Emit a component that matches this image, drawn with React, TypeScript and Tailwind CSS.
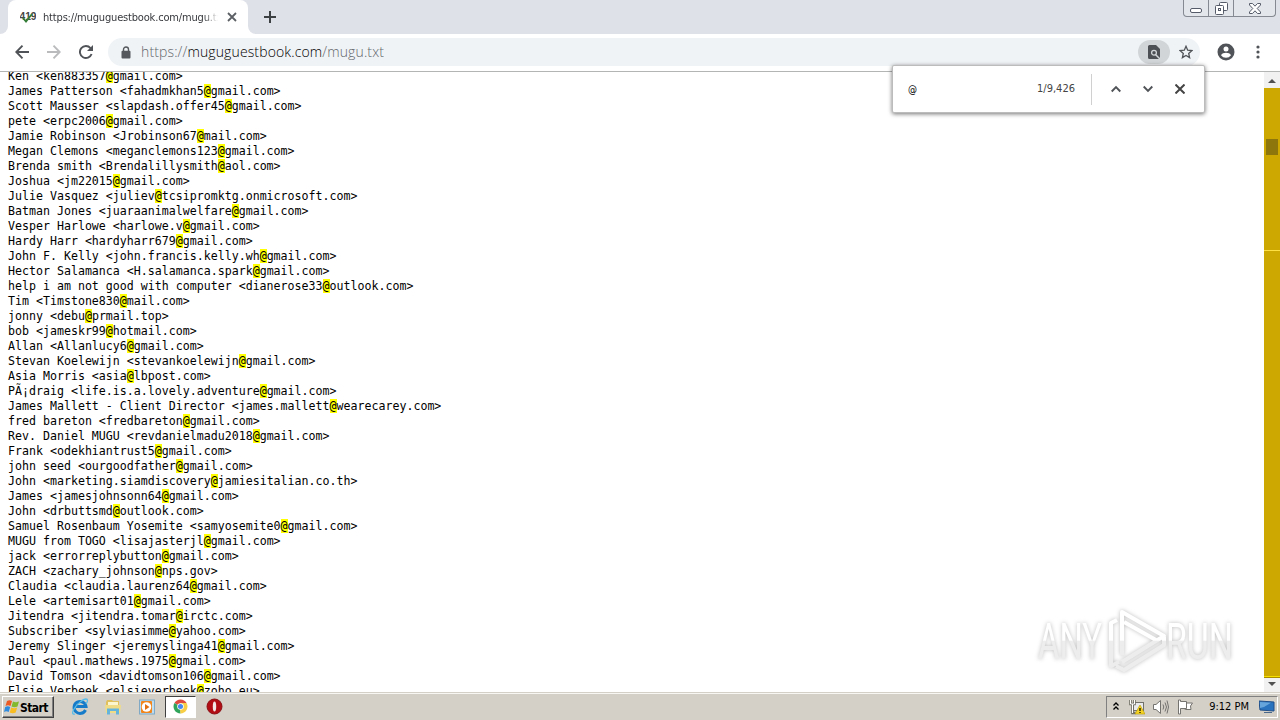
import { Fragment } from "react";

const entries = [
  "Ken <ken883357@gmail.com>",
  "James Patterson <fahadmkhan5@gmail.com>",
  "Scott Mausser <slapdash.offer45@gmail.com>",
  "pete <erpc2006@gmail.com>",
  "Jamie Robinson <Jrobinson67@mail.com>",
  "Megan Clemons <meganclemons123@gmail.com>",
  "Brenda smith <Brendalillysmith@aol.com>",
  "Joshua <jm22015@gmail.com>",
  "Julie Vasquez <juliev@tcsipromktg.onmicrosoft.com>",
  "Batman Jones <juaraanimalwelfare@gmail.com>",
  "Vesper Harlowe <harlowe.v@gmail.com>",
  "Hardy Harr <hardyharr679@gmail.com>",
  "John F. Kelly <john.francis.kelly.wh@gmail.com>",
  "Hector Salamanca <H.salamanca.spark@gmail.com>",
  "help i am not good with computer <dianerose33@outlook.com>",
  "Tim <Timstone830@mail.com>",
  "jonny <debu@prmail.top>",
  "bob <jameskr99@hotmail.com>",
  "Allan <Allanlucy6@gmail.com>",
  "Stevan Koelewijn <stevankoelewijn@gmail.com>",
  "Asia Morris <asia@lbpost.com>",
  "PÃ¡draig <life.is.a.lovely.adventure@gmail.com>",
  "James Mallett - Client Director <james.mallett@wearecarey.com>",
  "fred bareton <fredbareton@gmail.com>",
  "Rev. Daniel MUGU <revdanielmadu2018@gmail.com>",
  "Frank <odekhiantrust5@gmail.com>",
  "john seed <ourgoodfather@gmail.com>",
  "John <marketing.siamdiscovery@jamiesitalian.co.th>",
  "James <jamesjohnsonn64@gmail.com>",
  "John <drbuttsmd@outlook.com>",
  "Samuel Rosenbaum Yosemite <samyosemite0@gmail.com>",
  "MUGU from TOGO <lisajasterjl@gmail.com>",
  "jack <errorreplybutton@gmail.com>",
  "ZACH <zachary_johnson@nps.gov>",
  "Claudia <claudia.laurenz64@gmail.com>",
  "Lele <artemisart01@gmail.com>",
  "Jitendra <jitendra.tomar@irctc.com>",
  "Subscriber <sylviasimme@yahoo.com>",
  "Jeremy Slinger <jeremyslinga41@gmail.com>",
  "Paul <paul.mathews.1975@gmail.com>",
  "David Tomson <davidtomson106@gmail.com>",
  "Elsie Verbeek <elsieverbeek@zoho.eu>",
];

function Entry({ text }: { text: string }) {
  const parts = text.split("@");
  return (
    <div className="h-[15px] whitespace-pre">
      {parts.map((part, i) => (
        <Fragment key={i}>
          {i > 0 && <span className="inline-block h-[14px] bg-[#ffff00] align-top leading-[15px]">@</span>}
          {part}
        </Fragment>
      ))}
    </div>
  );
}

function TabStrip() {
  return (
    <div className="flex h-[34px] bg-[#dee1e8]">
      <div className="flex w-2 items-end bg-white">
        <div className="h-full w-2 rounded-br-lg bg-[#dee1e8]" />
      </div>
      <div className="flex h-[34px] w-60 items-center rounded-t-lg bg-white pl-3">
        <svg className="h-4 w-4 shrink-0" viewBox="0 0 16 16">
          <text x="-0.5" y="11" fontSize="10" fontWeight="bold" fontFamily="Liberation Sans, sans-serif" fill="#454545" textLength="17" lengthAdjust="spacingAndGlyphs">419</text>
          <path d="M3 9l3 3.5L12 5" fill="none" stroke="#347d38" strokeWidth="1.8" />
        </svg>
        <div className="ml-[7px] w-[175px] overflow-hidden whitespace-nowrap bg-linear-to-r from-[#303236] from-92% to-transparent bg-clip-text pt-px font-['DejaVu_Sans_Condensed','DejaVu_Sans',sans-serif] text-[11px] leading-[18px] tracking-[-0.17px] text-transparent">
          https://muguguestbook.com/mugu.txt
        </div>
        <svg className="ml-[9px] h-[10px] w-[10px]" viewBox="0 0 10 10" stroke="#5c6065" strokeWidth="1.8">
          <path d="M1 1l8 8M9 1l-8 8" />
        </svg>
      </div>
      <div className="w-2 bg-white">
        <div className="h-full w-2 rounded-bl-lg bg-[#dee1e8]" />
      </div>
      <svg className="mt-[11px] ml-2 h-3 w-3" viewBox="0 0 12 12" stroke="#3c4043" strokeWidth="2">
        <path d="M6 0v12M0 6h12" />
      </svg>
      <div className="mr-1 ml-auto flex h-[17px] w-[93px] rounded-b-[4px] border border-t-0 border-[#858991] bg-[#e3e6eb]">
        <div className="flex w-[25px] justify-center border-r border-[#858991] pt-2">
          <div className="h-[5px] w-3 rounded-[2px] border border-[#555b68] bg-white" />
        </div>
        <div className="flex w-[25px] justify-center border-r border-[#858991] pt-[2px]">
          <svg className="h-[13px] w-[13px]" viewBox="0 0 13 13" fill="#fff" stroke="#555b68">
            <rect x="4.5" y="0.5" width="8" height="8" rx="1" />
            <rect x="0.5" y="3.5" width="8" height="9" rx="1" />
            <rect x="3.5" y="6.5" width="2" height="2" />
          </svg>
        </div>
        <div className="flex flex-1 justify-center pt-[3px]">
          <svg className="h-[11px] w-3" viewBox="0 0 12 11">
            <path d="M.5.5h3L6 3.2 8.5.5h3V2L8.2 5.5 11.500 9v1.500h-3L6 7.800 3.500 10.500h-3V9l3.300-3.500L.5 2z" fill="#fff" stroke="#555b68" />
          </svg>
        </div>
      </div>
    </div>
  );
}

function Toolbar() {
  return (
    <div className="flex h-[38px] items-center border-b border-[#b3b5b4] bg-white pb-px pl-2 text-[#5f6368]">
      <svg className="ml-[7px] h-[14px] w-[14px]" viewBox="0 0 14 14" fill="none" stroke="#505357" strokeWidth="1.9">
        <path d="M14 7H1.500M7.500.7L1.300 7l6.200 6.300" />
      </svg>
      <svg className="ml-[18px] h-[14px] w-[14px]" viewBox="0 0 14 14" fill="none" stroke="#b9bbbd" strokeWidth="1.9">
        <path d="M0 7h12.500M6.500.7L12.700 7l-6.200 6.300" />
      </svg>
      <svg className="ml-[18px] h-[14px] w-[14px]" viewBox="0 0 14 14">
        <path d="M11.500 3.100A6 6 0 1 0 12.600 9" fill="none" stroke="#505357" strokeWidth="1.9" />
        <path d="M14 0v6H8z" fill="#505357" />
      </svg>
      <div className="ml-[15px] flex h-7 w-[1092px] items-center rounded-full bg-[#f0f3f6]">
        <svg className="ml-[13px] h-[13px] w-[10px]" viewBox="0 0 10 13">
          <path d="M2.500 5V3.500a2.500 2.500 0 0 1 5 0V5" fill="none" stroke="#55585c" strokeWidth="1.4" />
          <rect x="0.500" y="4.700" width="9" height="7.800" rx="1" fill="#55585c" />
        </svg>
        <div className="ml-[10px] flex-1 whitespace-nowrap font-['Open_Sans','Noto_Sans',sans-serif] text-[14px] leading-5 font-light tracking-[0.130px] text-[#63676b]">
          https://<span className="text-black">muguguestbook.com</span>/mugu.txt
        </div>
        <div className="mr-[9px] flex h-6 w-8 items-center justify-center rounded-full bg-[#d2d5d7]">
          <svg className="h-[14px] w-3" viewBox="0 0 12 14">
            <path d="M1.500 0H8l4 4v8.500a1.500 1.500 0 0 1-1.500 1.500h-9A1.500 1.500 0 0 1 0 12.500v-11A1.500 1.500 0 0 1 1.500 0z" fill="#4d5054" />
            <path d="M7.500 9.500L12 14" stroke="#d2d5d7" strokeWidth="1.500" />
            <circle cx="6" cy="7.700" r="2.400" fill="#4d5054" stroke="#d2d5d7" strokeWidth="1.300" />
          </svg>
        </div>
        <svg className="mr-[7px] h-[14px] w-[14px]" viewBox="0 0 14 14">
          <path d="M7 1.300l1.700 3.900 4.200.4-3.200 2.800.9 4.200L7 10.400l-3.600 2.200.9-4.200L1.100 5.600l4.200-.4z" fill="none" stroke="#505357" strokeWidth="1.300" />
        </svg>
      </div>
      <svg className="ml-[17px] h-[18px] w-[18px]" viewBox="0 0 18 18">
        <circle cx="9" cy="9" r="8.500" fill="#505357" />
        <circle cx="9" cy="6" r="2.500" fill="#fff" />
        <path d="M4 12.300c.3-1.700 3.400-2.500 5-2.500s4.700.8 5 2.500a6.200 6.200 0 0 1-10 0z" fill="#fff" />
      </svg>
      <svg className="ml-[21px] h-[14px] w-1" viewBox="0 0 4 14" fill="#505357">
        <circle cx="2" cy="2" r="1.600" />
        <circle cx="2" cy="7" r="1.600" />
        <circle cx="2" cy="12" r="1.600" />
      </svg>
    </div>
  );
}

function FindBar() {
  return (
    <div className="absolute top-[65px] left-[892px] flex h-[48px] w-[313px] items-center rounded-[2px] border border-[#bcbcbc] bg-white font-['DejaVu_Sans_Condensed','DejaVu_Sans',sans-serif] text-[11px] text-[#333] shadow-[0_1px_4px_rgba(0,0,0,0.55)]">
      <span className="ml-[15px] flex-1 text-[10px] text-black">@</span>
      <span className="pt-px text-[#444]">1/9,426</span>
      <div className="ml-4 h-[31px] w-px bg-[#d0d0d0]" />
      <svg className="ml-[19px] h-2 w-[10px]" viewBox="0 0 10 8" fill="none" stroke="#505357" strokeWidth="1.900">
        <path d="M.700 6.500L5 2.200l4.300 4.300" />
      </svg>
      <svg className="ml-[22px] h-2 w-[10px]" viewBox="0 0 10 8" fill="none" stroke="#505357" strokeWidth="1.900">
        <path d="M.700 1.500L5 5.800l4.300-4.300" />
      </svg>
      <svg className="mr-[19px] ml-[22px] h-[10px] w-[10px]" viewBox="0 0 10 10" stroke="#444" strokeWidth="2">
        <path d="M.500.500l9 9M9.500.500l-9 9" />
      </svg>
    </div>
  );
}

function Scrollbar() {
  return (
    <div className="flex w-4 flex-col bg-[#cca800]">
      <div className="flex h-4 items-center justify-center bg-[#f1f1f1] pt-0.5">
        <svg className="h-1 w-2" viewBox="0 0 8 4"><path d="M0 4l4-4 4 4z" fill="#505050" /></svg>
      </div>
      <div className="mx-auto mt-[51px] h-4 w-3 bg-[#8d760b]" />
      <div className="mt-[95px] h-px bg-[#ffe044]" />
      <div className="mt-auto h-0.5 border-t border-[#f5e000] bg-[#a88b00]" />
      <div className="flex h-[14px] items-center justify-center bg-[#f1f1f1] pb-[3px]">
        <svg className="h-1 w-2" viewBox="0 0 8 4"><path d="M0 0h8L4 4z" fill="#505050" /></svg>
      </div>
    </div>
  );
}

function Watermark() {
  return (
    <svg className="absolute top-[605px] left-[1032px] h-[72px] w-[208px] drop-shadow-[0_0_2px_rgba(0,0,0,0.26)]" viewBox="0 0 208 72">
      <defs>
        <linearGradient id="wm" x1="0" y1="0" x2="0" y2="72" gradientUnits="userSpaceOnUse">
          <stop offset="0.490" stopColor="#ffffff" />
          <stop offset="0.500" stopColor="#ededed" />
        </linearGradient>
      </defs>
      <g fill="url(#wm)" fontFamily="Roboto, sans-serif" fontSize="50">
        <text x="6" y="54" textLength="64" lengthAdjust="spacingAndGlyphs">ANY</text>
        <text x="134" y="54" textLength="67" lengthAdjust="spacingAndGlyphs">RUN</text>
      </g>
      <g fill="none" stroke="url(#wm)" strokeWidth="4" strokeLinejoin="round">
        <path d="M90 50V7l42 24-42 26" />
        <path d="M85 15l-6 3v43l8-4M92 17l32 18M84 61l8 4 40-25v-8" />
      </g>
    </svg>
  );
}

function Taskbar() {
  return (
    <div className="flex h-7 items-center border-t border-[#d4d0c8] bg-[#d4d0c8] font-['DejaVu_Sans_Condensed','DejaVu_Sans',sans-serif] text-[11px] text-black shadow-[inset_0_1px_0_#f8f7f4]">
      <div className="mt-px ml-0.5 flex h-[22px] w-[52px] items-center border border-t-white border-r-[#404040] border-b-[#404040] border-l-white pl-px shadow-[inset_-1px_-1px_0_#808080]">
        <svg className="h-4 w-4 shrink-0" viewBox="0 0 16 16">
          <path d="M3 2c2-1 3-1 5 0L6.500 7c-2-1-3-1-5 0z" fill="#ed5b25" />
          <path d="M9 2.500c2 1 3 1 6 0l-1.500 5c-2 1-4 1-6 0z" fill="#83b92f" />
          <path d="M1.200 8c2-1 3-1 5 0l-1.500 5c-2-1-3-1-4.700 0z" fill="#2f8bdd" />
          <path d="M7.200 8.500c2 1 4 1 6 0l-1.500 5c-2 1-4 1-6 0z" fill="#f9bd24" />
        </svg>
        <span className="pt-px text-[12px] font-bold tracking-[-0.6px]">Start</span>
      </div>
      <svg className="ml-[17px] h-[18px] w-[18px]" viewBox="0 0 18 18">
        <path d="M14.500 12A6 6 0 1 1 15 8.500H5" fill="none" stroke="#167cc9" strokeWidth="3" />
        <path d="M4 16c-3 1-3-2-1-5C6 6 12 1 15 1c2 0 2 2 0 5" fill="none" stroke="#56bce9" strokeWidth="1.300" />
      </svg>
      <svg className="ml-4 h-4 w-4" viewBox="0 0 16 16">
        <path d="M1 3l1-2h5l1 1h6v12H1z" fill="#e0c05c" />
        <path d="M3 3h10v5H3z" fill="#fbf5d0" />
        <path d="M0 6h16l-1 8H1z" fill="#f0dc86" />
        <path d="M2 15.500v-6h12v6h-3V12H5v3.500z" fill="#66b4db" />
      </svg>
      <svg className="ml-[18px] h-4 w-4" viewBox="0 0 16 16">
        <rect x="0.500" y="1" width="15" height="14" fill="#bcdcf1" stroke="#7fa9c4" />
        <rect x="2" y="2" width="11" height="12" rx="1" fill="#f1861c" />
        <circle cx="7.500" cy="8" r="4.800" fill="#fff" />
        <path d="M6 5l4.500 3L6 11z" fill="#e07010" />
      </svg>
      <div className="ml-2.5 flex h-[22px] w-[31px] items-center justify-center border border-t-[#404040] border-r-white border-b-white border-l-[#404040] bg-white">
        <svg className="h-[15px] w-[15px]" viewBox="0 0 16 16">
          <path d="M8 8L1.500 4.300A7.500 7.500 0 0 1 14.500 4.300z" fill="#dd4b3e" />
          <path d="M8 8L1.500 4.300A7.500 7.500 0 0 0 8 15.500z" fill="#2fa45a" />
          <path d="M8 8h-1l1 7.500A7.500 7.500 0 0 0 14.500 4.300H8z" fill="#f7ce46" />
          <circle cx="8" cy="8" r="3.500" fill="#fff" />
          <circle cx="8" cy="8" r="2.700" fill="#4688ef" />
        </svg>
      </div>
      <svg className="ml-[10px] h-[17px] w-[17px]" viewBox="0 0 17 17">
        <circle cx="8.500" cy="8.500" r="7.500" fill="#b20d15" stroke="#8b1014" />
        <ellipse cx="8.500" cy="8.500" rx="1.700" ry="5" fill="#f3e8e6" />
      </svg>
      <div className="mr-0.5 ml-auto flex h-[22px] w-[172px] items-center border border-t-[#808080] border-r-white border-b-white border-l-[#808080]">
        <svg className="mb-0.5 ml-1.5 h-2 w-[6px]" viewBox="0 0 6 8" fill="none" stroke="#000" strokeWidth="1.300">
          <path d="M.5 3.500L3 1l2.500 2.500M.5 7.500L3 5l2.500 2.500" />
        </svg>
        <svg className="ml-2.5 h-4 w-4" viewBox="0 0 16 16">
          <rect x="4.500" y="3.500" width="10" height="8" fill="#e9eaeb" stroke="#71706a" />
          <path d="M1.500 1v4h4V1M3.500 5v9h3" fill="none" stroke="#716f67" strokeWidth="2.600" />
          <path d="M1.500 1v4h4V1M3.500 5v9" fill="none" stroke="#fff" />
          <path d="M11 6l5 9H6z" fill="#f6d323" stroke="#b69700" strokeWidth=".6" />
          <path d="M11 9v3m0 1v1" stroke="#000" strokeWidth="1.200" />
        </svg>
        <svg className="ml-2 h-4 w-4" viewBox="0 0 16 16" fill="none" stroke="#75736f">
          <path d="M.500 5.500H3L7.500 1.500v13L3 10.500H.500z" fill="#fff" />
          <path d="M10 5.500q1.500 2.500 0 5M12 3.500q3 4.500 0 9M14 1.500q3 6.500 0 13" />
        </svg>
        <svg className="ml-2 h-4 w-4" viewBox="0 0 16 16" fill="#fff" stroke="#75736f">
          <path d="M1.500 1v14h2V9.500h6v-7h-6V1z" />
          <path d="M9.500 4h6l-2 3 .5 3.500H9l-2-1h2.500z" />
        </svg>
        <span className="ml-auto pt-0.5 whitespace-nowrap">9:12 PM</span>
        <svg className="mr-0.5 ml-[10px] h-[14px] w-4" viewBox="0 0 16 14">
          <path d="M0 1l15 1v9L1 10z" fill="#2972bd" stroke="#204f89" />
          <path d="M1 2l11 .7L5 7 1 8z" fill="#65a5dc" />
          <path d="M5 12h8v1H5z" fill="#486789" />
        </svg>
      </div>
    </div>
  );
}

export default function App() {
  return (
    <div className="relative flex h-[720px] w-[1280px] flex-col overflow-hidden bg-white">
      <TabStrip />
      <Toolbar />
      <div className="flex h-[620px] overflow-hidden">
        <div className="-mt-[3px] flex-1 pl-2 font-['DejaVu_Sans_Mono',monospace] text-[11.628px] leading-[15px] text-black">
          {entries.map((text) => (
            <Entry key={text} text={text} />
          ))}
        </div>
        <Scrollbar />
      </div>
      <Taskbar />
      <FindBar />
      <Watermark />
    </div>
  );
}
